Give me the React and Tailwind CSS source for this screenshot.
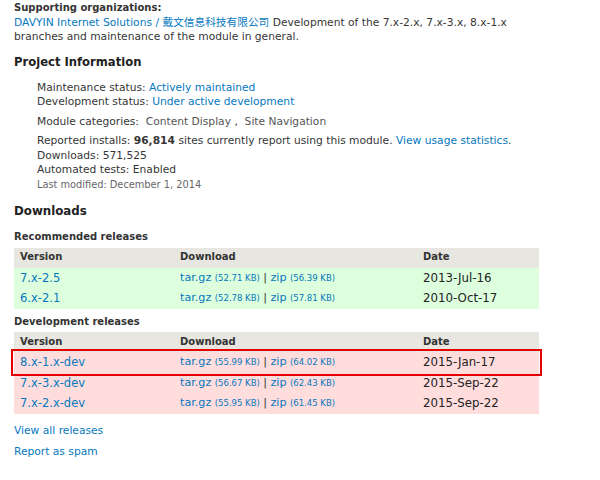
import React from "react";

const link = "text-[#0678be]";

const recommended = [
  { v: "7.x-2.5", tar: "52.71", zip: "56.39", date: "2013-Jul-16" },
  { v: "6.x-2.1", tar: "52.78", zip: "57.81", date: "2010-Oct-17" },
];

const dev = [
  { v: "8.x-1.x-dev", tar: "55.99", zip: "64.02", date: "2015-Jan-17", hl: true },
  { v: "7.x-3.x-dev", tar: "56.67", zip: "62.43", date: "2015-Sep-22" },
  { v: "7.x-2.x-dev", tar: "55.95", zip: "61.45", date: "2015-Sep-22" },
];

const ReleaseTable = ({ rows, bg }) => (
  <table className="w-[525px] border-collapse table-fixed mt-[3px]">
    <thead>
      <tr className="bg-[#e7e6e0] h-[20px] text-left text-[10px] text-[#333]">
        <th className="w-[160px] pl-[6px] font-bold">Version</th>
        <th className="w-[243px] pl-[6px] font-bold">Download</th>
        <th className="pl-[6px] font-bold">Date</th>
      </tr>
    </thead>
    <tbody>
      {rows.map((r) => (
        <tr
          key={r.v}
          className={`${bg} h-[20.5px] ${r.hl ? "outline-2 outline-[#e60000] outline-offset-[1px]" : ""}`}
        >
          <td className={`pl-[6px] text-[11.5px] ${link}`}>{r.v}</td>
          <td className="pl-[6px] whitespace-nowrap">
            <span className={`text-[11.2px] ${link}`}>tar.gz</span>{" "}
            <span className={`text-[8.5px] ${link}`}>({r.tar} KB)</span>{" "}
            <span className="text-[11.2px] text-[#333]">|</span>{" "}
            <span className={`text-[11.2px] ${link}`}>zip</span>{" "}
            <span className={`text-[8.5px] ${link}`}>({r.zip} KB)</span>
          </td>
          <td className="pl-[6px] text-[11.8px] text-[#222]">{r.date}</td>
        </tr>
      ))}
    </tbody>
  </table>
);

export default function App() {
  return (
    <div
      className="w-[600px] h-[480px] bg-white text-[#363636] text-[10.7px] leading-[14.5px] px-[14px] pt-[1px] overflow-hidden"
      style={{ fontFamily: '"DejaVu Sans", "Noto Sans CJK SC", sans-serif' }}
    >
      <div className="font-bold text-[10px] text-[#333]">Supporting organizations:</div>
      <p className="w-[530px]">
        <span className={link}>DAVYIN Internet Solutions / 戴文信息科技有限公司</span>{" "}
        Development of the 7.x-2.x, 7.x-3.x, 8.x-1.x branches and maintenance of the module in general.
      </p>

      <h2 className="text-[11.6px] leading-[15px] font-bold mt-[10px] text-[#222]">Project Information</h2>

      <div className="pl-[23px] mt-[11px]">
        <div>
          Maintenance status: <span className={link}>Actively maintained</span>
        </div>
        <div>
          Development status: <span className={link}>Under active development</span>
        </div>
        <div className="mt-[5.5px]">
          Module categories:&nbsp; <span className="text-[#555]">Content Display</span> ,&nbsp;{" "}
          <span className="text-[#555]">Site Navigation</span>
        </div>
        <div className="mt-[4.5px]">
          Reported installs: <b>96,814</b> sites currently report using this module.{" "}
          <span className={link}>View usage statistics</span>.
        </div>
        <div>Downloads: 571,525</div>
        <div>Automated tests: Enabled</div>
        <div className="text-[9.8px] text-[#666]">Last modified: December 1, 2014</div>
      </div>

      <h2 className="text-[11.8px] leading-[15px] font-bold mt-[12px] text-[#222]">Downloads</h2>

      <div className="font-bold text-[10px] mt-[11px] text-[#333]">Recommended releases</div>
      <ReleaseTable rows={recommended} bg="bg-[#ddffdd]" />

      <div className="font-bold text-[10px] mt-[6px] text-[#333]">Development releases</div>
      <ReleaseTable rows={dev} bg="bg-[#ffdddd]" />

      <div className={`${link} mt-[10px]`}>View all releases</div>
      <div className={`${link} mt-[7px]`}>Report as spam</div>
    </div>
  );
}
